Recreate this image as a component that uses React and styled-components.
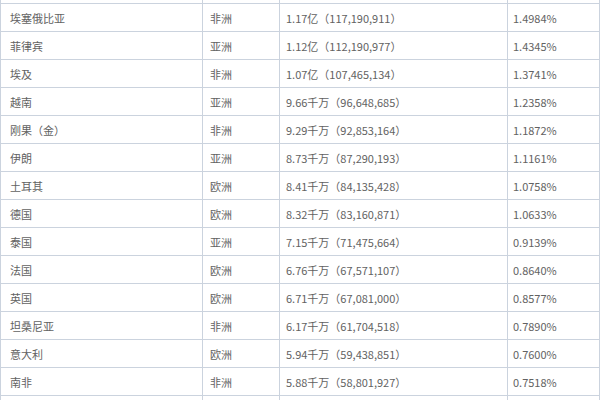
import styled, { createGlobalStyle } from 'styled-components'

const GlobalStyle = createGlobalStyle`
  html, body {
    margin: 0;
    padding: 0;
    background: #ffffff;
    overflow: hidden;
  }
`

const rows = [
  ['埃塞俄比亚', '非洲', '1.17亿（117,190,911）', '1.4984%'],
  ['菲律宾', '亚洲', '1.12亿（112,190,977）', '1.4345%'],
  ['埃及', '非洲', '1.07亿（107,465,134）', '1.3741%'],
  ['越南', '亚洲', '9.66千万（96,648,685）', '1.2358%'],
  ['刚果（金）', '非洲', '9.29千万（92,853,164）', '1.1872%'],
  ['伊朗', '亚洲', '8.73千万（87,290,193）', '1.1161%'],
  ['土耳其', '欧洲', '8.41千万（84,135,428）', '1.0758%'],
  ['德国', '欧洲', '8.32千万（83,160,871）', '1.0633%'],
  ['泰国', '亚洲', '7.15千万（71,475,664）', '0.9139%'],
  ['法国', '欧洲', '6.76千万（67,571,107）', '0.8640%'],
  ['英国', '欧洲', '6.71千万（67,081,000）', '0.8577%'],
  ['坦桑尼亚', '非洲', '6.17千万（61,704,518）', '0.7890%'],
  ['意大利', '欧洲', '5.94千万（59,438,851）', '0.7600%'],
  ['南非', '非洲', '5.88千万（58,801,927）', '0.7518%'],
]

const Table = styled.div`
  width: 600px;
  font-family: "Noto Sans CJK SC", "Liberation Sans", sans-serif;
  font-size: 11px;
  color: #626262;
`

const Row = styled.div`
  display: grid;
  grid-template-columns: 202px 77px 228px 93px;
  height: ${({ $height }) => $height}px;
  border-bottom: ${({ $open }) => ($open ? 'none' : '1px solid #cbd3de')};
`

const Cell = styled.div`
  display: flex;
  align-items: center;
  padding-left: ${({ $pad }) => $pad}px;
  border-left: 1px solid #cbd3de;
  white-space: nowrap;
  overflow: hidden;

  &:last-child {
    border-right: 1px solid #cbd3de;
  }
`

const pads = [9, 7, 6, 5]

const Edge = ({ open }) => (
  <Row $height={open ? 4 : 3} $open={open}>
    {pads.map((p, i) => (
      <Cell key={i} $pad={p} />
    ))}
  </Row>
)

const App = () => (
  <>
    <GlobalStyle />
    <Table>
      <Edge />
      {rows.map((row) => (
        <Row key={row[0]} $height={27}>
          {row.map((text, i) => (
            <Cell key={i} $pad={pads[i]}>
              {text}
            </Cell>
          ))}
        </Row>
      ))}
      <Edge open />
    </Table>
  </>
)

export default App
